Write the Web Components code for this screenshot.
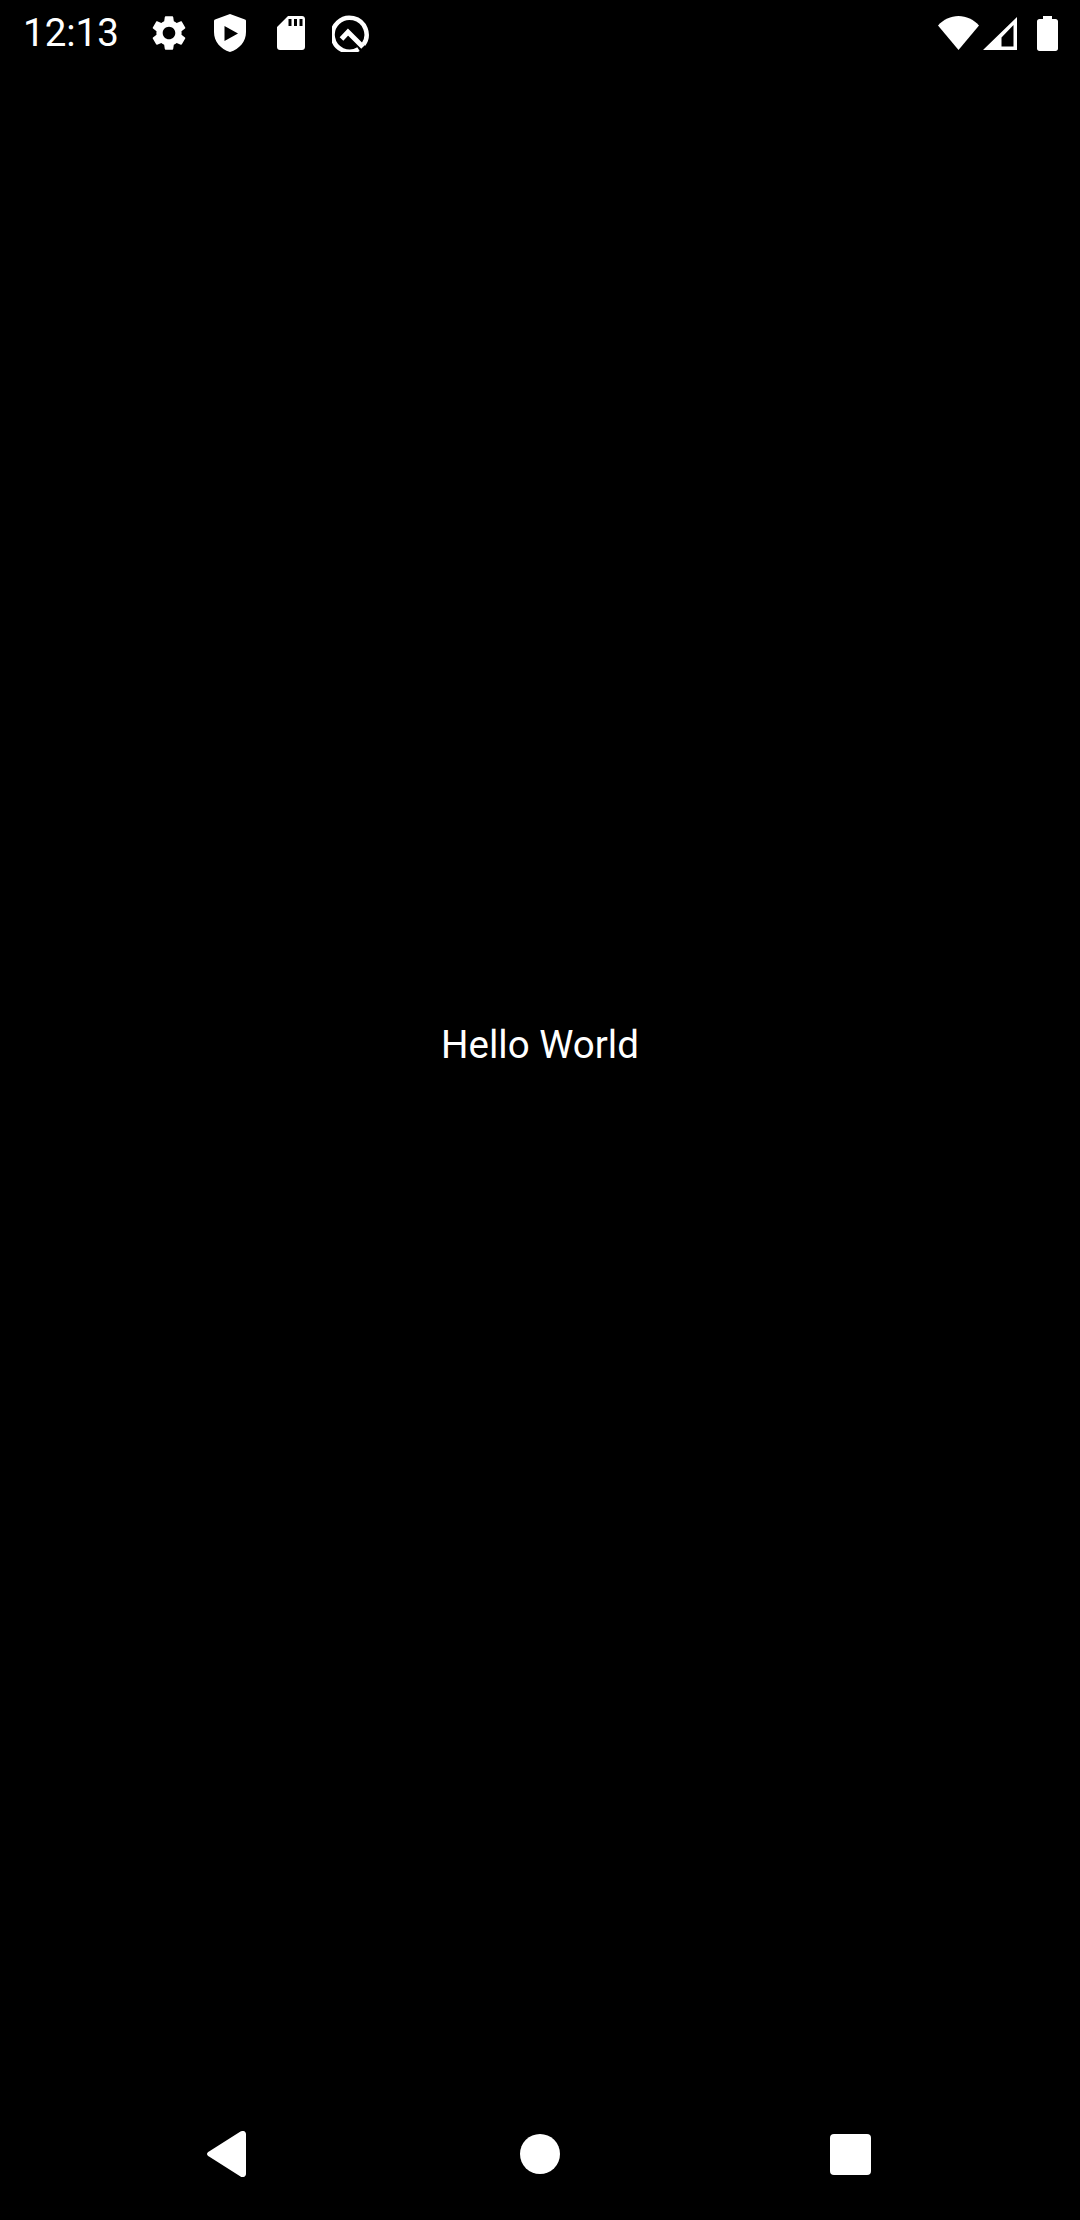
<!DOCTYPE html>
<html>
<head>
<meta charset="utf-8">
<title>Hello World</title>
<style>
  html, body { margin: 0; height: 100%; background: #000; }
</style>
</head>
<body>
<app-screen>
  <status-bar slot="status"></status-bar>
  <hello-content>Hello World</hello-content>
  <nav-bar slot="nav"></nav-bar>
</app-screen>

<script>
const screenTemplate = document.createElement('template');
screenTemplate.innerHTML = `
  <style>
    :host {
      display: flex;
      flex-direction: column;
      height: 2220px;
      background: #000;
      color: #fff;
      font-family: Roboto, sans-serif;
    }
    main { flex: 1; display: flex; min-height: 0; }
  </style>
  <slot name="status"></slot>
  <main><slot></slot></main>
  <slot name="nav"></slot>
`;

class AppScreen extends HTMLElement {
  constructor() {
    super();
    this.attachShadow({ mode: 'open' });
    this.shadowRoot.appendChild(screenTemplate.content.cloneNode(true));
  }
}

const statusTemplate = document.createElement('template');
statusTemplate.innerHTML = `
  <style>
    :host {
      display: flex;
      align-items: center;
      justify-content: space-between;
      height: 66px;
      padding: 0 22px 0 23px;
    }
    .group { display: flex; align-items: center; }
    .time { font-size: 38.5px; width: 125px; line-height: 66px; }
    svg { display: block; fill: #fff; }
    .gear { width: 42px; height: 42px; }
    .shield { width: 32px; height: 38px; margin-left: 24px; }
    .sd { width: 28px; height: 34px; margin-left: 31px; }
    .q { width: 38px; height: 38px; margin-left: 27px; }
    .wifi { width: 41px; height: 34px; }
    .signal { width: 34px; height: 33px; margin-left: 4px; }
    .battery { width: 21px; height: 35px; margin-left: 20px; }
  </style>
  <div class="group">
    <span class="time">12:13</span>
    <svg class="gear" viewBox="0 0 24 24"><path d="M19.14 12.94c.04-.3.06-.61.06-.94 0-.32-.02-.64-.07-.94l2.03-1.58c.18-.14.23-.41.12-.61l-1.92-3.32c-.12-.22-.37-.29-.59-.22l-2.39.96c-.5-.38-1.03-.7-1.62-.94l-.36-2.54c-.04-.24-.24-.41-.48-.41h-3.84c-.24 0-.43.17-.47.41l-.36 2.54c-.59.24-1.13.57-1.62.94l-2.39-.96c-.22-.08-.47 0-.59.22L2.74 8.87c-.12.21-.08.47.12.61l2.03 1.58c-.05.3-.09.63-.09.94s.02.64.07.94l-2.03 1.58c-.18.14-.23.41-.12.61l1.92 3.32c.12.22.37.29.59.22l2.39-.96c.5.38 1.03.7 1.62.94l.36 2.54c.05.24.24.41.48.41h3.84c.24 0 .44-.17.47-.41l.36-2.54c.59-.24 1.13-.56 1.62-.94l2.39.96c.22.08.47 0 .59-.22l1.92-3.32c.12-.22.07-.47-.12-.61l-2.01-1.58zM12 15.6c-1.98 0-3.6-1.62-3.6-3.6s1.62-3.6 3.6-3.6 3.6 1.62 3.6 3.6-1.62 3.6-3.6 3.6z"/></svg>
    <svg class="shield" viewBox="0 0 32 38"><path fill-rule="evenodd" d="M16 0 31 5.600c.6.2 1 .8 1 1.400v11c0 9.400-6.400 17-16 20C6.400 35 0 27.400 0 18V7c0-.6.4-1.200 1-1.400zM10.500 12v15l13.500-7.500z"/></svg>
    <svg class="sd" viewBox="0 0 28 34"><path fill-rule="evenodd" d="M11 0H25c1.700 0 3 1.300 3 3V31c0 1.700-1.300 3-3 3H3c-1.700 0-3-1.300-3-3V11zM11.500 3v7h3V3zM17 3v7h3V3zM22.500 3v7h3V3z"/></svg>
    <svg class="q" viewBox="0 0 38 38">
      <path fill="none" stroke="#fff" stroke-width="4.500" d="M26.500 35.200A17 17 0 1 1 31.500 30.500"/>
      <path fill="none" stroke="#fff" stroke-width="5" stroke-linejoin="miter" d="M9.500 25 16 18 31 33"/>
    </svg>
  </div>
  <div class="group">
    <svg class="wifi" viewBox="0 0 41 34"><path d="M20.500 34 0 9.500C5.500 3.500 12.700 0 20.500 0S35.500 3.500 41 9.500z"/></svg>
    <svg class="signal" viewBox="0 0 34 33"><path fill-rule="evenodd" d="M34 0V33H0zM30.500 8 18.500 20.500V29.500H30.500z"/></svg>
    <svg class="battery" viewBox="0 0 21 35"><path d="M6 0H15V3H18.500C20 3 21 4 21 5.500V32.500C21 34 20 35 18.500 35H2.500C1 35 0 34 0 32.500V5.500C0 4 1 3 2.500 3H6z"/></svg>
  </div>
`;

class StatusBar extends HTMLElement {
  constructor() {
    super();
    this.attachShadow({ mode: 'open' });
    this.shadowRoot.appendChild(statusTemplate.content.cloneNode(true));
  }
}

const contentTemplate = document.createElement('template');
contentTemplate.innerHTML = `
  <style>
    :host {
      flex: 1;
      display: flex;
      align-items: center;
      justify-content: center;
      padding-bottom: 66px; /* centred on the window above the nav bar, status bar included */
      font-size: 38.5px;
    }
  </style>
  <slot></slot>
`;

class HelloContent extends HTMLElement {
  constructor() {
    super();
    this.attachShadow({ mode: 'open' });
    this.shadowRoot.appendChild(contentTemplate.content.cloneNode(true));
  }
}

const navTemplate = document.createElement('template');
navTemplate.innerHTML = `
  <style>
    :host {
      display: flex;
      align-items: center;
      justify-content: center;
      gap: 270px;
      height: 132px;
    }
    svg { display: block; fill: #fff; }
    .back { width: 39px; height: 46px; margin-left: -2px; margin-right: 4px; }
    .home { width: 40px; height: 40px; }
    .recent { width: 41px; height: 41px; }
  </style>
  <svg class="back" viewBox="0 0 39 46"><path d="M33.500.6C36 -1 39 .5 39 3V43c0 2.500-3 4-5.500 2.400L2 25.500c-2.600-1.400-2.600-3.600 0-5z"/></svg>
  <svg class="home" viewBox="0 0 40 40"><circle cx="20" cy="20" r="20"/></svg>
  <svg class="recent" viewBox="0 0 41 41"><rect width="41" height="41" rx="4"/></svg>
`;

class NavBar extends HTMLElement {
  constructor() {
    super();
    this.attachShadow({ mode: 'open' });
    this.shadowRoot.appendChild(navTemplate.content.cloneNode(true));
  }
}

customElements.define('app-screen', AppScreen);
customElements.define('status-bar', StatusBar);
customElements.define('hello-content', HelloContent);
customElements.define('nav-bar', NavBar);
</script>
</body>
</html>
